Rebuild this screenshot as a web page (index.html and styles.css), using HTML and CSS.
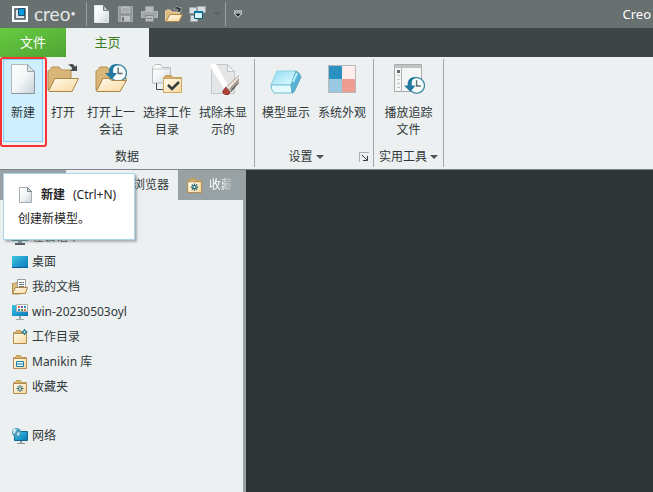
FILE: index.html
```html
<!DOCTYPE html>
<html lang="zh-CN">
<head>
    <meta charset="UTF-8">
    <meta name="viewport" content="width=device-width, initial-scale=1.0">
    <title>Creo</title>
    <link rel="stylesheet" href="styles.css">
</head>
<body>
    <!-- Shared icon shapes -->
    <svg class="sprite" width="0" height="0" aria-hidden="true">
        <defs>
            <linearGradient id="paper" x1="0" y1="0" x2="1" y2="1">
                <stop offset="0" stop-color="#ffffff"/><stop offset=".5" stop-color="#f3f5f6"/><stop offset="1" stop-color="#c5d3da"/>
            </linearGradient>
            <linearGradient id="cream" x1="0" y1="0" x2="1" y2="1">
                <stop offset="0" stop-color="#fffdf0"/><stop offset="1" stop-color="#f8d79a"/>
            </linearGradient>
            <linearGradient id="screen" x1="0" y1="0" x2="1" y2="1">
                <stop offset="0" stop-color="#3cc8e0"/><stop offset="1" stop-color="#0a74bd"/>
            </linearGradient>
            <linearGradient id="ice" x1="0" y1="0" x2="1" y2="1">
                <stop offset="0" stop-color="#8edcf3"/><stop offset="1" stop-color="#e4fbff"/>
            </linearGradient>
            <symbol id="page" viewBox="0 0 32 32">
                <path d="M4.500 1.500h16l7 7v22h-23z" fill="url(#paper)" stroke="#b3b9bb"/>
                <path d="M27.500 8.500v22h-23" fill="none" stroke="#8c969a"/>
                <path d="M20.500 1.500v7h7z" fill="#dbe2e5" stroke="#9ba4a8"/>
            </symbol>
            <symbol id="page-small" viewBox="0 0 16 16">
                <path d="M1.500 .5h8l4 4v11h-12z" fill="url(#paper)" stroke="#a5adb0"/>
                <path d="M9.500 .5v4h4z" fill="#d5dde1" stroke="#7d878b"/>
            </symbol>
            <symbol id="folder" viewBox="0 0 32 32">
                <path d="M1 27V8l2-1 2-3h7l3 3h9v20z" fill="#d9b577" stroke="#b58e50"/>
                <path d="M1.500 28 8 15.500h23.500L25 28.500H2z" fill="url(#cream)" stroke="#a98548"/>
            </symbol>
            <symbol id="folder-small" viewBox="0 0 16 16">
                <path d="M1.500 14V3.500h2l1-2h4l1 2h5V14z" fill="#d8b271" stroke="#c39b58"/>
                <path d="M1.500 4.500h13v10h-13z" fill="url(#cream)" stroke="#b58d4e"/>
            </symbol>
            <symbol id="clock" viewBox="0 0 20 18">
                <circle cx="12" cy="9" r="7.500" fill="#f7fcfd" stroke="#3f86a5" stroke-width="1.200"/>
                <path d="M12 4v5.500h4" fill="none" stroke="#5d6c73" stroke-width="1.300"/>
                <path d="M12 1C6 0 3 4 3.500 9H0l6 6 5-6H7.500C7 5 8 2 12 1z" fill="#23799f"/>
            </symbol>
            <symbol id="star" viewBox="0 0 16 16">
                <path d="M8 6v7M4.500 9.500h7M5.500 7l5 5M10.500 7l-5 5" stroke="#155f7d"/>
                <circle cx="8" cy="9.500" r="1" fill="#fff3cf"/>
            </symbol>
        </defs>
    </svg>

    <header class="titlebar">
        <svg class="logo-mark" viewBox="0 0 16 16" aria-hidden="true">
            <path d="M0 0h16v16H0z" fill="#fff"/>
            <path d="M3 3h10v10H3z" fill="#dfe5e8" stroke="#47545b" stroke-width="1.500"/>
            <path d="M6.500 2.500h6v7h-6z" fill="#0d9adb" stroke="#23516d"/>
        </svg>
        <span class="logo-text">creo<sup>•</sup></span>
        <span class="separator"></span>
        <nav class="quick-access">
            <button type="button" aria-label="新建文件"><svg viewBox="0 0 18 18"><path d="M1.500 .5h9l5 5v12h-14z" fill="url(#paper)" stroke="#e4e8ea"/><path d="M10.500 .5v5h5z" fill="#bec8cc" stroke="#737e82"/></svg></button>
            <button type="button" aria-label="保存"><svg viewBox="0 0 18 18"><path d="M1.500 1.500h14v15h-14z" fill="#929797" stroke="#a6abab"/><path d="M4 2h9v6H4z" fill="#b8bcbc"/><path d="M5 4h7M5 6h7" stroke="#969b9b"/><path d="M4 11h9v5H4z" fill="#c1c4c4"/><path d="M5 12h2v4H5z" fill="#6e7474"/></svg></button>
            <button type="button" aria-label="打印"><svg viewBox="0 0 18 18"><path d="M4.500 1.500h8v5h-8z" fill="#b8bcbc" stroke="#989d9d"/><path d="M.5 6.500h16v6H.5z" fill="#a2a7a7" stroke="#b5b9b9"/><path d="M4.500 10.500h8v6h-8z" fill="#b9bdbd" stroke="#858b8b"/><path d="M6 13.500h5" stroke="#7b8181"/></svg></button>
            <button type="button" aria-label="打开文件"><svg viewBox="0 0 18 18"><path d="M.5 16V6l1-1h4l1 2h8v9z" fill="#dfbd80" stroke="#e5cda0"/><path d="M1 16.500 5 9.500h12.500L14 16.500z" fill="url(#cream)" stroke="#af8745"/><path d="M9 4c2-3 4-3 6-1l1-1v5h-5l2-2c-1-1-2-1-4-1z" fill="#31393a" stroke="#c9cece" stroke-width=".6"/></svg></button>
            <button type="button" aria-label="窗口"><svg viewBox="0 0 18 18"><g fill="#d8dddf" stroke="#9ba7ac"><path d="M.5 2.500h7v6h-7zM8.500 1.500h8v6h-8zM1.500 10.500h7v6h-7z"/></g><path d="M5.500 6.500h8v7h-8z" fill="#d7f4fb" stroke="#075675"/><path d="M5.500 7h8" stroke="#087ca5" stroke-width="2"/></svg></button>
            <span class="arrow dim"></span>
        </nav>
        <span class="separator"></span>
        <button type="button" class="customize" aria-label="自定义"><svg viewBox="0 0 10 8"><path d="M1 1h8" stroke="#e7eaea"/><path d="M1 3h8L5 7.500z" fill="#1f2526" stroke="#e7eaea"/></svg></button>
        <span class="window-title">Creo</span>
    </header>

    <nav class="ribbon-tabs">
        <button type="button" class="file-tab">文件</button>
        <button type="button" class="home-tab">主页</button>
    </nav>

    <section class="ribbon">
        <div class="group">
            <div class="tools">
                <div class="highlighted">
                    <button type="button" class="tool active">
                        <svg viewBox="0 0 32 32"><use href="#page"/></svg>
                        <span>新建</span>
                    </button>
                    <div class="tooltip" role="tooltip">
                        <div class="tooltip-head">
                            <svg viewBox="0 0 16 16"><use href="#page-small"/></svg>
                            <strong>新建</strong>
                            <span>(Ctrl+N)</span>
                        </div>
                        <div>创建新模型。</div>
                    </div>
                </div>
                <button type="button" class="tool">
                    <svg viewBox="0 0 32 32"><use href="#folder"/><path d="M21 2c4-2 6-1 7 2l2-2v6h-7l2-2c0-2-1-3-4-4z" fill="#454b4c"/></svg>
                    <span>打开</span>
                </button>
                <button type="button" class="tool wide">
                    <svg viewBox="0 0 32 32"><use href="#folder"/><use href="#clock" x="10" y="0" width="22" height="20"/><path d="M1.500 28 8 15.500h6l3 2h14.500L25 28.500H2z" fill="url(#cream)" stroke="#a98548"/></svg>
                    <span>打开上一<br>会话</span>
                </button>
                <button type="button" class="tool wide">
                    <svg viewBox="0 0 32 32"><path d="M1.500 20V4.500l1-1 2-2h5l2 3h8V20z" fill="url(#paper)" stroke="#b9bdbe"/><path d="M2 6h17" stroke="#c8cbcb"/><path d="M5.500 20v6.500H12" fill="none" stroke="#454c4e"/><path d="M12.500 29.500V14.500h1l1-2h6l1 2h9v15z" fill="#d5ae6b" stroke="#c59b55"/><path d="M12.500 15.500h18v14h-18z" fill="url(#cream)" stroke="#d1a660"/><path d="m17 22 4 4 7-7" fill="none" stroke="#343b3d" stroke-width="2.500"/></svg>
                    <span>选择工作<br>目录</span>
                </button>
                <button type="button" class="tool wide">
                    <svg viewBox="0 0 32 32"><path d="M4.500 1.500h16l7 7v22h-23z" fill="#e3e5e6" stroke="#c4c8ca"/><path d="M20.500 1.500v7h7z" fill="#f1f2f2" stroke="#bfc4c6"/><path d="m4 5 14 22 4-3L9 1H4z" fill="#fff"/><path d="m19 24 13-12v6L24 29z" fill="#a99d93"/><path d="m20 24 12-11v2L22 26z" fill="#f1e9df"/><path d="m23 28 9-9v1l-8 9z" fill="#4f4a47"/><path d="m16 28 3-4 4 4-1 3-3 1-3-2z" fill="#b1433d" stroke="#8a302c"/><path d="m19 23 5 5" stroke="#d7d8d8" stroke-width="1.500"/></svg>
                    <span>拭除未显<br>示的</span>
                </button>
            </div>
            <div class="group-label">数据</div>
        </div>

        <div class="group">
            <div class="tools">
                <button type="button" class="tool wide">
                    <svg viewBox="0 0 32 32"><path d="M7 8h19L21 22H1z" fill="url(#ice)" stroke="#8ed3e6"/><path d="M1 22h20l2 8H4q-3-3-3-8z" fill="#e3faff" stroke="#77bdd4"/><path d="m26 8q4 2 5 6l-7 15-2 1-1-8z" fill="#58b4d6" stroke="#5ba5bf"/><path d="m23 19 4-9" stroke="#b5eefa" stroke-width="2"/></svg>
                    <span>模型显示</span>
                </button>
                <button type="button" class="tool wide">
                    <svg viewBox="0 0 32 32"><path d="M2 2h14v14H2z" fill="#2a91c1"/><path d="M16 2h14v14H16z" fill="#ffedec"/><path d="M2 16h14v14H2z" fill="#98c9e1"/><path d="M16 16h14v14H16z" fill="#ee9b91"/><path d="M2.500 2.500h27v27h-27z" fill="none" stroke="#b7b8b8"/></svg>
                    <span>系统外观</span>
                </button>
            </div>
            <div class="group-label with-launcher">设置<span class="arrow"></span>
                <button type="button" class="launcher" aria-label="更多设置"><svg viewBox="0 0 10 10"><path d="M.5 10V.5H10" fill="none" stroke="#a8afb1"/><path d="m3 3 5 5M8.500 4v4.500H4" fill="none" stroke="#343b3d"/></svg></button>
            </div>
        </div>

        <div class="group">
            <div class="tools">
                <button type="button" class="tool trail">
                    <svg viewBox="0 0 32 32"><path d="M1.500 1.500h27v27h-27z" fill="#f5f7f7" stroke="#a6adaf"/><path d="M2 2h26v3H2z" fill="#bfc3c4"/><path d="M8.500 5v23" stroke="#afb5b6"/><path d="M4 7h3v3H4z" fill="#656c6e"/><path d="M4 12.500h3M4 16.500h3M4 20.500h3M4 24.500h3" stroke="#c1c5c6"/><use href="#clock" x="11" y="13" width="21" height="19"/></svg>
                    <span>播放追踪<br>文件</span>
                </button>
            </div>
            <div class="group-label">实用工具<span class="arrow"></span></div>
        </div>
    </section>

    <main class="workspace">
        <aside class="sidebar">
            <div class="side-tabs">
                <div class="side-tab"></div>
                <div class="side-tab current">浏览器</div>
                <div class="side-tab favorites">
                    <svg viewBox="0 0 16 16"><use href="#folder-small"/><use href="#star"/></svg>
                    <span>收藏</span>
                </div>
            </div>
            <ul class="places">
                <li><svg viewBox="0 0 16 16"><path d="M0 3h16v9H0z" fill="#287f9f"/><path d="M3 14h10v2H3z" fill="#555f63"/><path d="M6 12h4v2H6z" fill="#8a9396"/></svg>在会话中</li>
                <li><svg viewBox="0 0 16 16"><path d="M0 2h16v12H0z" fill="url(#screen)"/><path d="M0 13.500h11m1 0h1m1 0h2" stroke="#075a8f"/></svg>桌面</li>
                <li><svg viewBox="0 0 16 16"><path d="M.5 15V4.500h2l1-1h4V15z" fill="#dfbd80" stroke="#b58d4e"/><path d="M5.500 .5h8v11h-8z" fill="#fff" stroke="#949da0"/><path d="M7 3.500h5M7 5.500h5M7 7.500h5" stroke="#737c80"/><path d="m.5 14.500 3-6h12l-2 6z" fill="url(#cream)" stroke="#a98548"/></svg>我的文档</li>
                <li><svg viewBox="0 0 16 16"><path d="M0 1h16v11H0z" fill="url(#screen)"/><path d="M7 12h2v3H7zM4 15h8v1H4z" fill="#a3aaad"/><path d="M4.500 .5h11v7h-11z" fill="#fff" stroke="#aab1b4"/><path d="M6 2h2v2H6zM12 5h2v2h-2z" fill="#e46d37"/><path d="M9 2h2v2H9z" fill="#7856b5"/><path d="M12 2h2v2h-2zM6 5h2v2H6z" fill="#278bc4"/><path d="M9 5h2v2H9z" fill="#51a446"/></svg>win-20230503oyl</li>
                <li><svg viewBox="0 0 16 16"><use href="#folder-small"/><path d="m12.500-.5 1.300 2.200L16 3l-2.200 1.300-1.300 2.200-1.300-2.200L9 3l2.200-1.300z" fill="#167192"/><circle cx="12.500" cy="3" r="1" fill="#d7f2f9"/></svg>工作目录</li>
                <li><svg viewBox="0 0 16 16"><use href="#folder-small"/><path d="M4.500 7.500h7v5h-7z" fill="#e9fbff" stroke="#1c7fa7"/><path d="M5 10h6" stroke="#1c7fa7"/></svg>Manikin 库</li>
                <li><svg viewBox="0 0 16 16"><use href="#folder-small"/><use href="#star"/></svg>收藏夹</li>
                <li class="network"><svg viewBox="0 0 16 16"><path d="M2.500 3.500h13v9h-13z" fill="url(#screen)" stroke="#14678d"/><path d="M8 13h2v2H8zM5 15h8v1H5z" fill="#8d969a"/><circle cx="4.500" cy="4.500" r="4.500" fill="#4b9dbb"/><path d="M1 2c2-2 3-1 4-1L3 5 1 6zM5 5l3-1-1 3-2 1z" fill="#c8e6ed"/></svg>网络</li>
            </ul>
        </aside>
        <div class="canvas"></div>
    </main>
</body>
</html>
```
FILE: styles.css
```css
* {
    box-sizing: border-box;
}
body {
    margin: 0;
    min-height: 100vh;
    display: flex;
    flex-direction: column;
    font-family: "Noto Sans", "Noto Sans CJK SC", sans-serif;
    font-size: 12px;
    line-height: 17px;
    color: #30383a;
    background-color: #2f3535;
}
button {
    margin: 0;
    padding: 0;
    border: 0;
    background: none;
    color: inherit;
    font: inherit;
}
svg {
    display: block;
    flex: none;
}
.sprite {
    position: absolute;
}

/* Title bar */
.titlebar {
    display: flex;
    align-items: center;
    height: 28px;
    padding: 0 2px 0 12px;
    background-color: #687070;
    color: #fff;
}
.logo-mark {
    width: 16px;
    height: 16px;
}
.logo-text {
    width: 52px;
    margin-left: 6px;
    font-family: Lato, sans-serif;
    font-size: 19px;
    line-height: 24px;
    color: #e4e8e8;
}
.logo-text sup {
    font-size: 9px;
    line-height: 6px;
    vertical-align: 4px;
}
.separator {
    width: 1px;
    height: 24px;
    background-color: #9aa1a1;
}
.quick-access {
    display: flex;
    align-items: center;
    gap: 6px;
    margin: 0 4px 0 6px;
}
.quick-access svg {
    width: 18px;
    height: 18px;
}
.arrow {
    display: inline-block;
    border: 4px solid transparent;
    border-top-color: #4b5355;
    border-bottom: 0;
}
.arrow.dim {
    border-top-color: #5b6363;
}
.customize {
    margin-left: 7px;
}
.customize svg {
    width: 10px;
    height: 8px;
}
.window-title {
    margin-left: auto;
    font-size: 13px;
}

/* Ribbon tabs */
.ribbon-tabs {
    display: flex;
    height: 29px;
    background-color: #3d4547;
    font-size: 13px;
}
.file-tab {
    width: 66px;
    background: linear-gradient(160deg, #66cc40, #50a334);
    color: #fff;
}
.home-tab {
    width: 83px;
    background-color: #ecf0f1;
    color: #397d20;
}

/* Ribbon */
.ribbon {
    display: flex;
    height: 113px;
    padding-top: 2px;
    background-color: #ecf0f1;
    border-bottom: 1px solid #7d8789;
}
.group {
    display: flex;
    flex-direction: column;
    height: 108px;
    padding: 0 3px;
    border-right: 1px solid #a0a7a9;
}
.tools {
    display: flex;
    flex: 1;
    align-items: flex-start;
}
.tool {
    display: flex;
    flex-direction: column;
    align-items: center;
    width: 40px;
    height: 83px;
    padding-top: 4px;
    white-space: nowrap;
}
.tool svg {
    width: 32px;
    height: 32px;
    margin-bottom: 9px;
}
.tool.wide {
    width: 56px;
}
.tool.trail {
    width: 63px;
}
.tool.active {
    border: 1px solid #7dd0fa;
    background-color: #cfefff;
    padding-top: 3px;
}
.highlighted {
    position: relative;
}
.highlighted::after {
    content: "";
    position: absolute;
    inset: -2px -4px -5px -3px;
    border: 2px solid #fa3232;
    border-radius: 3px;
}
.group-label {
    position: relative;
    height: 19px;
    text-align: center;
    white-space: nowrap;
}
.group-label .arrow {
    margin-left: 3px;
    vertical-align: 2px;
}
.group-label.with-launcher {
    padding-right: 16px;
}
.launcher {
    position: absolute;
    right: 1px;
    top: 4px;
}
.launcher svg {
    width: 10px;
    height: 10px;
}

/* Tooltip of the hovered tool */
.tooltip {
    position: absolute;
    z-index: 2;
    top: 114px;
    left: 0;
    width: 132px;
    padding: 12px 14px 11px;
    border: 1px solid #a9d5e8;
    background-color: #fff;
    box-shadow: 2px 2px 2px #7d878999;
    white-space: nowrap;
    line-height: 18px;
    color: #1f2526;
}
.tooltip-head {
    display: flex;
    align-items: center;
    margin-bottom: 6px;
}
.tooltip-head svg {
    width: 16px;
    height: 16px;
    margin-right: 7px;
}
.tooltip-head strong {
    margin-right: 8px;
}

/* Workspace */
.workspace {
    display: flex;
    flex: 1;
}
.sidebar {
    width: 246px;
    background-color: #ecf0f1;
    border-right: 3px solid #98a2a5;
}
.side-tabs {
    display: flex;
    height: 30px;
    background-color: #98a2a5;
    line-height: 30px;
}
.side-tab {
    width: 66px;
}
.side-tab.current {
    width: 112px;
    padding-right: 9px;
    background-color: #ecf0f1;
    text-align: right;
}
.side-tab.favorites {
    display: flex;
    align-items: center;
    gap: 6px;
    width: 65px;
    padding-left: 8px;
    color: #fff;
    white-space: nowrap;
}
.favorites svg {
    width: 17px;
    height: 17px;
}
.favorites span {
    -webkit-mask-image: linear-gradient(to right, #000 50%, transparent);
    mask-image: linear-gradient(to right, #000 50%, transparent);
}
.places {
    margin: 0;
    padding: 24px 0 0 12px;
    list-style: none;
}
.places li {
    display: flex;
    align-items: center;
    gap: 4px;
    height: 25px;
}
.places svg {
    width: 16px;
    height: 16px;
}
.places .network {
    margin-top: 24px;
}
.canvas {
    flex: 1;
    background-color: #2f3535;
}
```
